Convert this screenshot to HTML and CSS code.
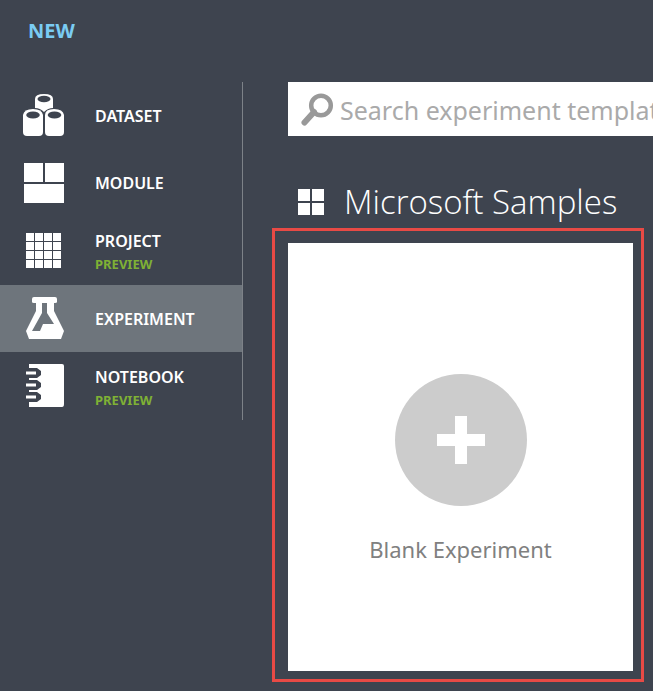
FILE: index.html
```html
<!DOCTYPE html>
<html lang="en">
<head>
<meta charset="utf-8">
<meta name="viewport" content="width=device-width, initial-scale=1">
<title>New experiment</title>
<link rel="stylesheet" href="styles.css">
</head>
<body>
<header class="header"><h1 class="title">NEW</h1></header>
<div class="layout">
  <nav class="nav" aria-label="New item type">
    <a class="item" href="#dataset">
      <svg class="icon" viewBox="0 0 44 44" aria-hidden="true">
        <g fill="#fff">
          <path d="M13 5Q13 0 22 0T31 5V14Q26 14 22 18Q18 14 13 14Z"/>
          <path d="M1 21Q2 15 11 15T21 21V38Q21 42 17 42H5Q1 42 1 38Z"/>
          <path d="M23 21Q23 15 32 15T42 21V38Q42 42 38 42H27Q23 42 23 38Z"/>
        </g>
        <g fill="#3e444f"><ellipse cx="22" cy="5" rx="6.500" ry="3.300"/><ellipse cx="11" cy="21" rx="6.800" ry="3.500"/><ellipse cx="32.500" cy="21" rx="6.800" ry="3.500"/></g>
      </svg>
      <span class="label">DATASET</span>
    </a>
    <a class="item" href="#module">
      <svg class="icon" viewBox="0 0 44 44" aria-hidden="true"><path fill="#fff" d="M2 2h19v19H2zM23 2h19v19H23zM2 23h40v19H2z"/></svg>
      <span class="label">MODULE</span>
    </a>
    <a class="item" href="#project">
      <svg class="icon" viewBox="0 0 44 44" aria-hidden="true"><path fill="none" stroke="#fff" stroke-width="8" stroke-dasharray="8 1" d="M4 8h35M4 17h35M4 26h35M4 35h35"/></svg>
      <span class="label tagged">PROJECT<small class="tag">PREVIEW</small></span>
    </a>
    <a class="item active" href="#experiment" aria-current="page">
      <svg class="icon" viewBox="0 0 44 44" aria-hidden="true"><path fill="#fff" fill-rule="evenodd" d="M12 0H33Q35 0 35 2V5Q35 6 33 6H32V14L42 34L39 42H7L4 34L14 14V6H12Q10 6 10 5V2Q10 0 12 0ZM20 6V16L10 34H18L21 27H32L25 16V6Z"/></svg>
      <span class="label">EXPERIMENT</span>
    </a>
    <a class="item" href="#notebook">
      <svg class="icon" viewBox="0 0 44 44" aria-hidden="true">
        <path fill="#fff" d="M7 0H40Q42 0 42 2V40Q42 43 40 43H7Z"/>
        <path fill="#3e444f" d="M6 4H15L19 7V11L15 14H6ZM6 16H15L19 19V23L15 26H6ZM6 28H15L19 31V35L15 38H6Z"/>
        <path fill="#fff" d="M4 7.500h10v3H4zM4 19.500h10v3H4zM4 31.500h10v3H4z"/>
      </svg>
      <span class="label tagged">NOTEBOOK<small class="tag">PREVIEW</small></span>
    </a>
  </nav>
  <main class="main">
    <label class="search">
      <svg class="search-icon" viewBox="0 0 34 34" aria-label="Search"><g fill="none" stroke="#999"><circle cx="21" cy="12.500" r="9.800" stroke-width="4.500"/><path stroke-width="6" stroke-linecap="round" d="M14 19L4.500 29.500"/></g></svg>
      <input class="search-input" type="text" placeholder="Search experiment templates">
    </label>
    <h2 class="section">
      <svg class="grid-icon" viewBox="0 0 26 26" aria-hidden="true"><path fill="#fff" d="M0 0h12v12H0zM14 0h12v12H14zM0 14h12v12H0zM14 14h12v12H14z"/></svg>
      Microsoft Samples
    </h2>
    <div class="highlight">
      <button class="card" type="button">
        <svg class="plus" viewBox="0 0 132 132" aria-hidden="true"><circle cx="66" cy="66" r="66" fill="#ccc"/><path fill="#fff" d="M60 42h12v18h18v12H72v18H60V72H42V60h18z"/></svg>
        Blank Experiment
      </button>
    </div>
  </main>
</div>
</body>
</html>
```
FILE: styles.css
```css
* { box-sizing: border-box; }
body {
  margin: 0;
  background: #3e444f;
  color: #fff;
  font-family: "Noto Sans", "Open Sans", sans-serif;
  overflow-x: hidden;
}
.header { padding: 17px 28px 0; height: 82px; }
.title { margin: 0; color: #7accf3; font-size: 20px; line-height: 28px; font-weight: 700; }
.layout { display: flex; align-items: flex-start; }
.nav {
  flex: 0 0 243px;
  display: grid;
  grid-auto-rows: 1fr;
  min-height: 338px;
  border-right: 1px solid #7d8288;
}
.item {
  display: flex;
  align-items: center;
  gap: 29px;
  padding-left: 22px;
  color: #fff;
  text-decoration: none;
}
.active { background: #6e757c; }
.icon { width: 44px; height: 44px; }
.label { font-size: 16px; line-height: 24px; font-weight: 600; }
.tagged { padding-top: 3px; }
.tag { display: block; color: #7fb135; font-size: 13px; line-height: 22px; font-weight: 700; }
.main { flex: 1; min-width: 0; padding: 0 9px 9px 29px; }
.search {
  display: flex;
  align-items: center;
  gap: 6px;
  height: 54px;
  margin: 0 -9px 0 16px;
  padding: 2px 0 0 12px;
  background: #fff;
}
.search-icon { flex: none; width: 34px; height: 34px; }
.search-input {
  flex: 1;
  min-width: 0;
  padding: 0;
  border: 0;
  outline: 0;
  background: none;
  color: #666;
  font: 400 25px/36px "Noto Sans", "Open Sans", sans-serif;
}
.search-input::placeholder { color: #aaa; opacity: 1; }
.section {
  display: flex;
  align-items: center;
  gap: 20px;
  margin: 40px 0 0 26px;
  font-size: 33px;
  line-height: 52px;
  font-weight: 300;
  font-family: "Open Sans", "Noto Sans", sans-serif;
  white-space: nowrap;
}
.grid-icon { flex: none; width: 26px; height: 26px; }
.highlight { padding: 12px 8px 8px 13px; border: 3px solid #e84a45; }
.card {
  display: flex;
  flex-direction: column;
  align-items: center;
  justify-content: center;
  gap: 26px;
  width: 100%;
  min-height: 428px;
  padding: 26px 0 0;
  border: 0;
  background: #fff;
  color: #808080;
  font: 400 22px/34px "Noto Sans", "Open Sans", sans-serif;
}
.plus { width: 132px; height: 132px; }
```
